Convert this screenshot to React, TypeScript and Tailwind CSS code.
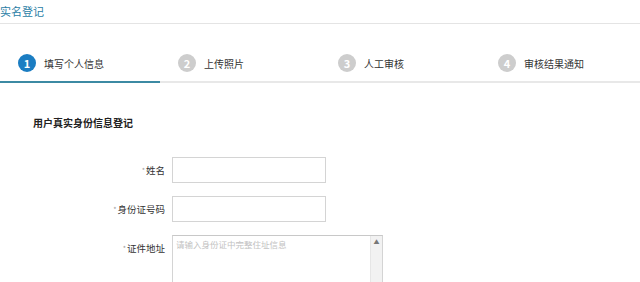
import React from 'react'

const FONT = { fontFamily: '"Noto Sans CJK SC", "Noto Sans", Arial, sans-serif' }

const STEPS = ['填写个人信息', '上传照片', '人工审核', '审核结果通知']

function Step({ index, label, active }: { index: number; label: string; active: boolean }) {
  return (
    <div className="flex h-full w-[160px] items-center pl-[18px]">
      <div
        className={
          active
            ? 'flex h-[18px] w-[18px] items-center justify-center rounded-full bg-[#1b7dc2] text-[11px] font-bold text-white'
            : 'flex h-[18px] w-[18px] items-center justify-center rounded-full bg-[#cdcdcd] text-[11px] font-bold text-white'
        }
      >
        {index}
      </div>
      <span className="ml-[8px] text-[10px] text-[#333]">{label}</span>
    </div>
  )
}

function Field({ label, children }: { label: string; children: React.ReactNode }) {
  return (
    <div className="flex items-start">
      <label className="flex h-[26px] w-[166px] items-center justify-end pr-[1px] text-[9.5px] text-[#333]">
        <span className="mr-[1px] text-[7px] text-[#999]">*</span>
        {label}
      </label>
      <div className="ml-[6px]">{children}</div>
    </div>
  )
}

export default function App() {
  return (
    <div className="h-[282px] w-[640px] overflow-hidden bg-white" style={FONT}>
      {/* header */}
      <div className="flex h-[24px] items-center border-b border-[#e4e4e4]">
        <span className="text-[11px] text-[#2a7ea6]">实名登记</span>
      </div>

      {/* steps */}
      <div className="mt-[21px] flex h-[36px] items-center">
        {STEPS.map((s, i) => (
          <Step key={s} index={i + 1} label={s} active={i === 0} />
        ))}
      </div>
      <div className="flex h-[2px]">
        <div className="w-[160px] bg-[#3c8aa3]" />
        <div className="flex-1 bg-[#e8e8e8]" />
      </div>

      {/* form */}
      <div className="pt-[33px]">
        <h2 className="pl-[33px] text-[10px] font-bold leading-[14px] text-[#222]">用户真实身份信息登记</h2>
        <div className="mt-[27px] flex flex-col gap-[13px]">
          <Field label="姓名">
            <div className="h-[26px] w-[154px] border border-[#d4d4d4]" />
          </Field>
          <Field label="身份证号码">
            <div className="h-[26px] w-[154px] border border-[#d4d4d4]" />
          </Field>
          <Field label="证件地址">
            <div className="flex h-[60px] w-[211px] border border-[#d4d4d4] border-t-[#c8c8c8]">
              <div className="flex-1 pl-[3px] pt-[2px] text-[8.5px] text-[#c2c2c2]">请输入身份证中完整住址信息</div>
              <div className="flex w-[12px] flex-col items-center border-l border-[#e6e6e6] bg-[#f2f2f2]">
                <span className="mt-[2px] text-[6px] leading-[8px] text-[#777]">▲</span>
              </div>
            </div>
          </Field>
        </div>
      </div>
    </div>
  )
}
